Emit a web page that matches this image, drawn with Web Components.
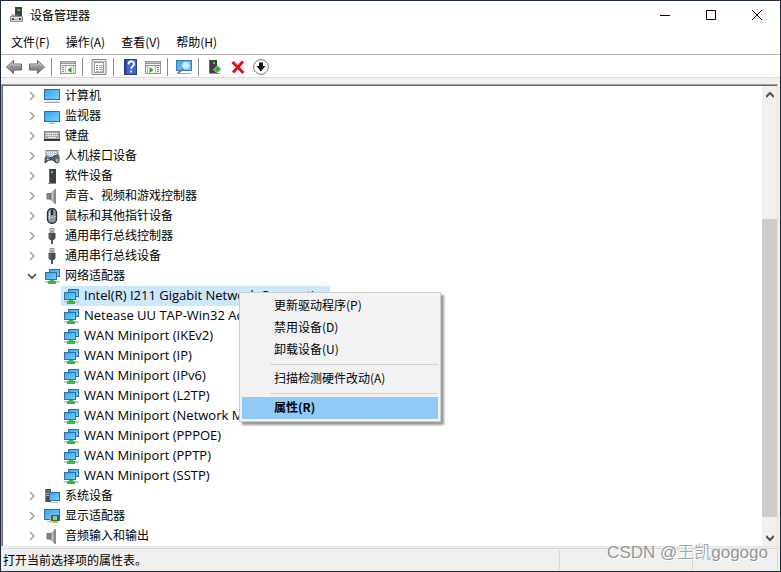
<!DOCTYPE html>
<html lang="zh-CN">
<head>
<meta charset="utf-8">
<title>设备管理器</title>
<style>
    html, body {
        margin: 0;
        height: 100%;
        overflow: hidden;
    }

    body {
        font: 12px/18px "Noto Sans CJK SC", sans-serif;
        color: #000;
    }
</style>
</head>
<body>
<device-manager></device-manager>

<script>
    // 图标集合，统一 16x16
    const DEFS = `
        <linearGradient id="scr" x1="0" y1="0" x2="1" y2="1"><stop offset="0" stop-color="#2ba4f7"/><stop offset="1" stop-color="#7fd0ff"/></linearGradient>
        <linearGradient id="gry" x1="0" y1="0" x2="0" y2="1"><stop offset="0" stop-color="#b8b8b8"/><stop offset="1" stop-color="#6e6e6e"/></linearGradient>
        <linearGradient id="mtl" x1="0" y1="0" x2="1" y2="0"><stop offset="0" stop-color="#606468"/><stop offset=".5" stop-color="#c3c7ca"/><stop offset="1" stop-color="#74787c"/></linearGradient>`;

    const ICONS = {
        manager: `<rect x="6" y="0" width="7" height="10" fill="#3d4043"/><rect x="8.500" y="2" width="2.500" height="2" fill="#35dc48"/><path d="M3 9V8h6v1" fill="none" stroke="#777"/><path d="M1.500 9.500h12v5h-12z" fill="#d9dbdd" stroke="#8f9295"/><path d="M2 12.500h11" stroke="#a7a9ab"/><path d="M4 11v2M11 11v2" stroke="#222" stroke-width="1.500"/>`,
        back: `<path d="M.5 8 7.500 1.500v3.500h8v6h-8v3.500z" fill="url(#gry)" stroke="#6a6a6a"/><path d="M2.200 7.700 6.500 3.800V6h8" fill="none" stroke="#c9c9c9"/>`,
        forward: `<path d="M15.500 8 8.500 1.500v3.500h-8v6h8v3.500z" fill="url(#gry)" stroke="#6a6a6a"/><path d="M1.500 6h8V3.800l4.300 3.900" fill="none" stroke="#c9c9c9"/>`,
        tree: `<rect x=".5" y="2.500" width="15" height="12" fill="#f4f5f7" stroke="#8e98a2"/><path d="M1 4.500h14M1 6.500h14" stroke="#8d97a2" /><path d="M1 3.500h14" stroke="#c0c7ce"/><path d="M5.500 7v7M13.500 7v7" stroke="#b4bbc2"/><path d="M2 8.500h2M2 10.500h2M2 12.500h2" stroke="#6c8eae"/><path d="M11.500 8v6L7.500 11z" fill="#24a72c"/>`,
        props: `<path d="M1 .5h14v15H1z" fill="#eee" stroke="#888"/><rect x="3.500" y="3.500" width="9" height="10" fill="#fff" stroke="#999"/><path d="M1 2.500h13" stroke="#bbb"/><path d="M5 6.500h2M5 8.500h2M5 10.500h2" stroke="#777"/><path d="M8 6.500h4M8 8.500h4M8 10.500h4M5 12.500h3M9 12.500h3" stroke="#aaa"/>`,
        help: `<rect x="2.500" y=".5" width="12" height="15" fill="#4168cc" stroke="#243d8e"/><path d="M3.500 1v14" stroke="#263f94" stroke-width="2"/><path d="M6.500 5.500c0-4 5.500-4 5.500-.6 0 2.200-2.800 2.200-2.800 4.800M9.200 11.500v2" fill="none" stroke="#fff" stroke-width="1.800"/>`,
        action: `<rect x=".5" y="2.500" width="15" height="12" fill="#f4f5f7" stroke="#8e98a2"/><path d="M1 4.500h14M1 6.500h14" stroke="#8d97a2"/><path d="M1 3.500h14" stroke="#c0c7ce"/><path d="M2.500 7v7M10.500 7v7" stroke="#b4bbc2"/><path d="M12 8.500h2M12 10.500h2M12 12.500h2" stroke="#6c8eae"/><path d="M4.500 8v6l4-3z" fill="#24a72c"/>`,
        scan: `<rect x=".5" y="1.500" width="15" height="10" fill="url(#scr)" stroke="#397fae"/><path d="M1 14.500h14" stroke="#9babb9"/><circle cx="10" cy="6.500" r="4.300" fill="#c7ebff" stroke="#7aa4c0"/><path d="m7 10-5 4" stroke="#647c90" stroke-width="2"/>`,
        update: `<rect x="2" y="1" width="8" height="14" fill="#3d4043"/><path d="M2.500 1v14" stroke="#65696c"/><rect x="6" y="3" width="2" height="2" fill="#35dc48"/><path d="M2 14.500h7" stroke="#969a9d"/><path d="M10.500 6.500 15 11h-2.500v2h-4v-2H6z" fill="#22b42c" stroke="#d8f2da" stroke-width=".5"/><path d="M8.500 14.500h4" stroke="#22b42c"/>`,
        remove: `<path d="m2.500 3 11 11M13 2.500 3 13.500" stroke="#d9141c" stroke-width="3"/>`,
        disable: `<circle cx="8" cy="8" r="7.400" fill="#fff" stroke="#777"/><path d="M6 3.500h4V7h2.500L8 12.500 3.500 7H6z" fill="#111"/>`,
        computer: `<rect x=".5" y="1.500" width="15" height="10" fill="url(#scr)" stroke="#346f9b"/><path d="M8 12v1M2 13.500h12" stroke="#dfe4e8"/><path d="M0 14.500h16" stroke="#97a5b7"/>`,
        monitor: `<rect x=".5" y="3.500" width="15" height="10" fill="url(#scr)" stroke="#346f9b"/><path d="M5 15.500h6M8 14v1" stroke="#a7b3bd"/>`,
        keyboard: `<rect x=".5" y="3.500" width="15" height="8" fill="#a9adb1" stroke="#85898d"/><path d="M2 5.500h12M2 7.500h12" stroke="#f4f6f8" stroke-dasharray="1.300 .7"/><path d="M4 9.500h8" stroke="#eef0f2"/><path d="M0 12h16" stroke="#34373a" stroke-width="2"/>`,
        hid: `<path d="M2 2.500h12v7H2z" fill="#c8ccd0" stroke="#81868b"/><path d="M3 4.500h10M3 6.500h10" stroke="#fff" stroke-dasharray="1 1"/><path d="M1 15c0-4 0-7 3-7l2 2h2l2-2c2 0 2 3 2 7l-3-3H5z" fill="#656b70" stroke="#34383b"/><circle cx="4" cy="9" r="1.300" fill="#39a9f0"/><path d="M3 11.500h1.500" stroke="#d9dcde"/><rect x="11" y="7" width="4" height="8" rx="2" fill="#a9b1b8" stroke="#33373b"/><path d="M13 8v3" stroke="#222"/>`,
        software: `<path d="M5 1h7v14H5z" fill="#3d4043"/><path d="M5.500 1v14" stroke="#686b6e"/><rect x="7" y="3" width="2" height="2" fill="#36e047"/><path d="M4 15.500h8" stroke="#8c8f91"/>`,
        sound: `<path d="M3 5.500h3V11H3z" fill="#8a8e91" stroke="#6b6e70"/><path d="M6 5.500 11 1v15l-5-4.500z" fill="url(#mtl)"/><path d="M11.500 1v15" stroke="#8a8e91"/>`,
        mouse: `<rect x="3.500" y=".7" width="9" height="14.600" rx="4" fill="#8c9aa6" stroke="#2f3336" stroke-width="1.400"/><path d="M5.500 4v7" stroke="#d9e1e8"/><rect x="7" y="2" width="2" height="5" fill="#222"/><path d="M4 8.500q4 2 8 0" fill="none" stroke="#bec9d3"/>`,
        usb: `<path d="M6 .5h4V5H6z" fill="#d8dadb" stroke="#8c8f92"/><path d="M7 3h2" stroke="#555"/><path d="M4.500 5h7v5L10 12H6l-1.500-2z" fill="#484b4e"/><path d="M6 6v4" stroke="#777b7e"/><path d="M8 12v4" stroke="#585b5e" stroke-width="2"/>`,
        network: `<rect x="5.500" y="1.500" width="10" height="7" fill="url(#scr)" stroke="#346f9b"/><rect x="1.500" y="4.500" width="11" height="7" fill="url(#scr)" stroke="#346f9b"/><path d="M1 14h15" stroke="#c9cdd0" stroke-width="2"/><path d="M6 12h4v1h2v3H4v-3h2z" fill="#38b843"/>`,
        system: `<path d="M1 1h6v13H1z" fill="#484c50"/><path d="M1.500 1v13" stroke="#83888c"/><path d="M3 3h3" stroke="#37e04b"/><path d="M2 5.500h4M2 7.500h3" stroke="#adb2b6"/><rect x="5.500" y="4.500" width="10" height="8" fill="url(#scr)" stroke="#346f9b"/><path d="M7 14.500h7" stroke="#aab7c4"/>`,
        display: `<rect x=".5" y="1.500" width="15" height="10" fill="url(#scr)" stroke="#346f9b"/><path d="M3 13.500h4" stroke="#aab7c4"/><rect x="6" y="7" width="10" height="6" fill="#20724c"/><rect x="9" y="8" width="4" height="4" fill="#a6b9ad"/><path d="M6.500 6v9" stroke="#aeb5ba"/><path d="M8 14h6" stroke="#e7b624" stroke-width="2"/>`
    };

    class DmIcon extends HTMLElement {
        constructor() {
            super();
            this.attachShadow({ mode: 'open' });
        }

        connectedCallback() {
            this.shadowRoot.innerHTML = `
                <style>
                    :host { display: block; flex: none; width: 16px; height: 16px; }
                    svg { display: block; }
                </style>
                <svg width="16" height="16" viewBox="0 0 16 16" fill="none" aria-hidden="true">
                    <defs>${DEFS}</defs>${ICONS[this.getAttribute('name')] || ''}
                </svg>
            `;
        }
    }

    class DmTitlebar extends HTMLElement {
        constructor() {
            super();
            this.attachShadow({ mode: 'open' });
        }

        connectedCallback() {
            this.shadowRoot.innerHTML = `
                <style>
                    :host { display: flex; align-items: center; height: 28px; padding-left: 8px; }
                    h1 { flex: 1; margin: 0 0 0 5px; font: inherit; }
                    button {
                        width: 46px; height: 28px; padding: 0; border: 0; background: none;
                        display: flex; align-items: center; justify-content: center;
                    }
                    button:hover { background: #e5e5e5; }
                    path { fill: none; stroke: #000; }
                </style>
                <dm-icon name="manager"></dm-icon>
                <h1><slot></slot></h1>
                <button aria-label="最小化"><svg width="10" height="10"><path d="M0 5.500h10"/></svg></button>
                <button aria-label="最大化"><svg width="10" height="10"><path d="M.5.5h9v9h-9z"/></svg></button>
                <button aria-label="关闭"><svg width="10" height="10"><path d="m0 0 10 10M10 0 0 10"/></svg></button>
            `;
        }
    }

    class DmMenubar extends HTMLElement {
        constructor() {
            super();
            this.attachShadow({ mode: 'open' });
        }

        connectedCallback() {
            const items = ['文件(F)', '操作(A)', '查看(V)', '帮助(H)'];
            this.shadowRoot.innerHTML = `
                <style>
                    :host { display: block; border-bottom: 1px solid #b4b4b4; }
                    nav { display: flex; height: 25px; padding-left: 2px; }
                    button { padding: 0 8px; border: 0; background: none; font: inherit; color: inherit; }
                    button:hover { background: #cce8ff; }
                </style>
                <nav>${items.map(t => `<button>${t}</button>`).join('')}</nav>
            `;
        }
    }

    class DmToolbar extends HTMLElement {
        constructor() {
            super();
            this.attachShadow({ mode: 'open' });
        }

        connectedCallback() {
            const groups = [
                [['back', '后退'], ['forward', '前进']],
                [['tree', '显示/隐藏控制台树']],
                [['props', '属性']],
                [['help', '帮助'], ['action', '显示/隐藏操作窗格']],
                [['scan', '扫描检测硬件改动']],
                [['update', '更新驱动程序'], ['remove', '卸载设备'], ['disable', '禁用设备']]
            ];
            this.shadowRoot.innerHTML = `
                <style>
                    :host { display: flex; align-items: center; height: 20px; padding: 2px 1px 0; border-bottom: 1px solid #dcdcdc; }
                    button { padding: 2px 3px 2px 4px; border: 0; background: none; }
                    i { width: 1px; height: 18px; margin: 0 4px 0 3px; background: #8c8c8c; }
                </style>
                ${groups.map(g => g.map(([icon, label]) =>
                    `<button aria-label="${label}"><dm-icon name="${icon}"></dm-icon></button>`
                ).join('')).join('<i></i>')}
            `;
        }
    }

    class DmNode extends HTMLElement {
        constructor() {
            super();
            this.attachShadow({ mode: 'open' });
        }

        connectedCallback() {
            const child = this.hasAttribute('child');
            const open = this.hasAttribute('open');
            const arrow = open
                ? '<path d="m1 3 4 4 4-4" stroke="#404040" stroke-width="1.600"/>'
                : '<path d="m3 1 4 4-4 4" stroke="#a6a6a6" stroke-width="1.600"/>';
            this.setAttribute('role', 'treeitem');
            this.shadowRoot.innerHTML = `
                <style>
                    :host { display: flex; align-items: center; height: 20px; padding-left: 24px; white-space: nowrap; }
                    :host([child]) { padding-left: 58px; font-family: "Open Sans", "Noto Sans CJK SC", sans-serif; font-size: 13px; }
                    button { display: flex; width: 17px; height: 20px; padding: 0 7px 0 0; border: 0; background: none; align-items: center; }
                    svg { flex: none; fill: none; }
                    .label { display: flex; align-items: center; gap: 5px; height: 20px; }
                    :host([child]) .label { padding-left: 2px; }
                    :host([selected]) .label { background: #cce8ff; }
                    span { padding-bottom: 2px; }
                </style>
                ${child ? '' : `<button aria-label="${open ? '折叠' : '展开'}"><svg width="10" height="10">${arrow}</svg></button>`}
                <div class="label"><dm-icon name="${this.getAttribute('icon')}"></dm-icon><span><slot></slot></span></div>
            `;
        }
    }

    class DmTree extends HTMLElement {
        constructor() {
            super();
            this.attachShadow({ mode: 'open' });
        }

        connectedCallback() {
            this.shadowRoot.innerHTML = `
                <style>
                    :host {
                        display: flex; flex: 1; min-height: 0; margin: 6px 2px 0 0; background: #fff;
                        border: 1px solid #a0a0a0; border-right-color: #e3e3e3; border-bottom-color: #e3e3e3;
                    }
                    .view { flex: 1; min-width: 0; overflow: hidden; border: solid #696969; border-width: 1px 0 0 1px; }
                    .bar { display: flex; flex-direction: column; width: 15px; background: #f0f0f0; border-top: 1px solid #696969; }
                    button { display: flex; align-items: center; justify-content: center; height: 17px; padding: 0; border: 0; background: none; }
                    path { fill: none; stroke: #505050; stroke-width: 2; }
                    .before { flex: 116; }
                    .thumb { flex: 298; background: #cdcdcd; }
                    .after { flex: 12; }
                </style>
                <div class="view" role="tree"><slot></slot></div>
                <div class="bar">
                    <button aria-label="向上滚动"><svg width="8" height="8"><path d="m0 6 4-4 4 4"/></svg></button>
                    <div class="before"></div>
                    <div class="thumb"></div>
                    <div class="after"></div>
                    <button aria-label="向下滚动"><svg width="8" height="8"><path d="m0 2 4 4 4-4"/></svg></button>
                </div>
            `;
        }
    }

    class DmContextMenu extends HTMLElement {
        constructor() {
            super();
            this.attachShadow({ mode: 'open' });
        }

        connectedCallback() {
            this.shadowRoot.innerHTML = `
                <style>
                    :host {
                        display: flex; flex-direction: column; box-sizing: border-box; width: 202px;
                        padding: 2px; border: 1px solid #ccc; background: #f2f2f2;
                        box-shadow: 3px 3px 2px rgba(0, 0, 0, .4);
                    }
                    button {
                        height: 22px; padding: 0 32px 2px; border: 0; background: none;
                        font: inherit; color: inherit; text-align: left; white-space: nowrap;
                    }
                    button.default { background: #91c9f7; font-weight: 700; }
                    hr { width: auto; margin: 3px 0 3px 28px; border: 0; border-top: 1px solid #d0d0d0; }
                </style>
                <button>更新驱动程序(P)</button>
                <button>禁用设备(D)</button>
                <button>卸载设备(U)</button>
                <hr>
                <button>扫描检测硬件改动(A)</button>
                <hr>
                <button class="default">属性(R)</button>
            `;
        }
    }

    class DmStatus extends HTMLElement {
        constructor() {
            super();
            this.attachShadow({ mode: 'open' });
        }

        connectedCallback() {
            this.shadowRoot.innerHTML = `
                <style>
                    :host { display: flex; height: 20px; margin-top: 1px; padding: 1px 2px 1px 0; border-top: 1px solid #d7d7d7; }
                    div { border-right: 1px solid #d7d7d7; }
                    .text { flex: 1; padding: 1px 0 0 2px; }
                    .pane { width: 132px; }
                    .last { width: 84px; }
                </style>
                <div class="text"><slot></slot></div>
                <div class="pane"></div>
                <div class="last"></div>
            `;
        }
    }

    class DeviceManager extends HTMLElement {
        constructor() {
            super();
            this.attachShadow({ mode: 'open' });
        }

        connectedCallback() {
            const nodes = [
                ['computer', '计算机'],
                ['monitor', '监视器'],
                ['keyboard', '键盘'],
                ['hid', '人机接口设备'],
                ['software', '软件设备'],
                ['sound', '声音、视频和游戏控制器'],
                ['mouse', '鼠标和其他指针设备'],
                ['usb', '通用串行总线控制器'],
                ['usb', '通用串行总线设备'],
                ['network', '网络适配器', 'open'],
                ['network', 'Intel(R) I211 Gigabit Network Connection', 'child selected'],
                ['network', 'Netease UU TAP-Win32 Adapter', 'child'],
                ['network', 'WAN Miniport (IKEv2)', 'child'],
                ['network', 'WAN Miniport (IP)', 'child'],
                ['network', 'WAN Miniport (IPv6)', 'child'],
                ['network', 'WAN Miniport (L2TP)', 'child'],
                ['network', 'WAN Miniport (Network Monitor)', 'child'],
                ['network', 'WAN Miniport (PPPOE)', 'child'],
                ['network', 'WAN Miniport (PPTP)', 'child'],
                ['network', 'WAN Miniport (SSTP)', 'child'],
                ['system', '系统设备'],
                ['display', '显示适配器'],
                ['sound', '音频输入和输出']
            ];
            this.shadowRoot.innerHTML = `
                <style>
                    :host {
                        position: relative; display: flex; flex-direction: column; box-sizing: border-box;
                        height: 100vh; border: 1px solid #1b2a3c; background: #f0f0f0;
                    }
                    dm-titlebar, dm-menubar, dm-toolbar { background: #fff; }
                    /* 右键菜单浮在树的上方 */
                    dm-context-menu { position: absolute; left: 238px; top: 291px; }
                    .mark {
                        position: absolute; right: 12px; bottom: 6px;
                        font: 300 17px/24px "Liberation Sans", "Noto Sans CJK SC", sans-serif;
                        color: #959595; text-shadow: 1px 1px 0 #fff;
                    }
                </style>
                <dm-titlebar>设备管理器</dm-titlebar>
                <dm-menubar></dm-menubar>
                <dm-toolbar></dm-toolbar>
                <dm-tree>${nodes.map(([icon, text, flags = '']) => `<dm-node icon="${icon}" ${flags}>${text}</dm-node>`).join('')}</dm-tree>
                <dm-status>打开当前选择项的属性表。</dm-status>
                <dm-context-menu></dm-context-menu>
                <div class="mark">CSDN @王凯gogogo</div>
            `;
        }
    }

    customElements.define('dm-icon', DmIcon);
    customElements.define('dm-titlebar', DmTitlebar);
    customElements.define('dm-menubar', DmMenubar);
    customElements.define('dm-toolbar', DmToolbar);
    customElements.define('dm-node', DmNode);
    customElements.define('dm-tree', DmTree);
    customElements.define('dm-context-menu', DmContextMenu);
    customElements.define('dm-status', DmStatus);
    customElements.define('device-manager', DeviceManager);
</script>
</body>
</html>
